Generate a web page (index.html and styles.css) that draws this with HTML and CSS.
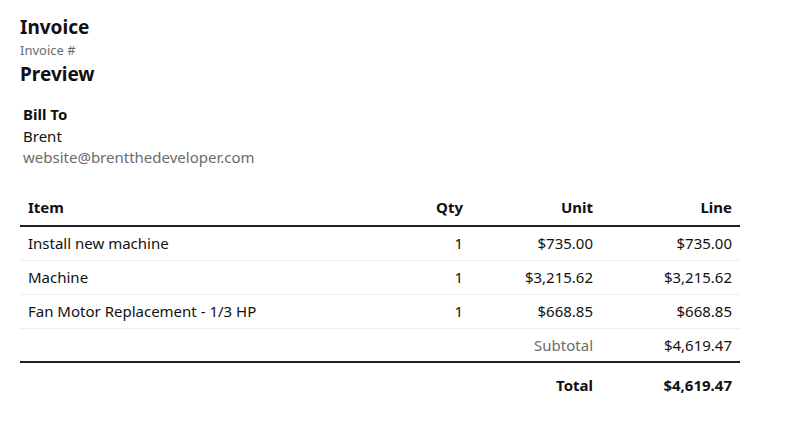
FILE: index.html
```html
<!DOCTYPE html>
<html lang="en">
<head>
    <meta charset="UTF-8">
    <meta name="viewport" content="width=device-width, initial-scale=1.0">
    <title>Invoice Preview</title>
    <link rel="stylesheet" href="styles.css">
</head>
<body>
    <div class="invoice">
        <div class="invoice-head">
            <h1 class="invoice-title">Invoice</h1>
            <div class="invoice-number">Invoice #</div>
            <h2 class="invoice-sub">Preview</h2>
        </div>

        <div class="bill-to">
            <div class="bill-label">Bill To</div>
            <div class="bill-name">Brent</div>
            <div class="bill-email">website@brentthedeveloper.com</div>
        </div>

        <table class="items">
            <thead>
                <tr>
                    <th class="col-item">Item</th>
                    <th class="col-qty num">Qty</th>
                    <th class="col-unit num">Unit</th>
                    <th class="col-line num">Line</th>
                </tr>
            </thead>
            <tbody>
                <tr>
                    <td>Install new machine</td>
                    <td class="num">1</td>
                    <td class="num">$735.00</td>
                    <td class="num">$735.00</td>
                </tr>
                <tr>
                    <td>Machine</td>
                    <td class="num">1</td>
                    <td class="num">$3,215.62</td>
                    <td class="num">$3,215.62</td>
                </tr>
                <tr>
                    <td>Fan Motor Replacement - 1/3 HP</td>
                    <td class="num">1</td>
                    <td class="num">$668.85</td>
                    <td class="num">$668.85</td>
                </tr>
            </tbody>
            <tfoot>
                <tr class="subtotal-row">
                    <td></td>
                    <td></td>
                    <td class="num muted">Subtotal</td>
                    <td class="num">$4,619.47</td>
                </tr>
                <tr class="total-row">
                    <td></td>
                    <td></td>
                    <td class="num">Total</td>
                    <td class="num">$4,619.47</td>
                </tr>
            </tfoot>
        </table>
    </div>
</body>
</html>
```

FILE: styles.css
```css
* {
    margin: 0;
    padding: 0;
    box-sizing: border-box;
}

body {
    font-family: "Noto Sans", "Open Sans", sans-serif;
    font-size: 15px;
    color: #111;
    background: #fff;
    padding: 14px 20px;
}

.invoice {
    width: 720px;
}

.invoice-title {
    font-size: 19px;
    line-height: 26px;
    font-weight: 700;
}

.invoice-number {
    font-size: 13px;
    line-height: 20px;
    color: #6b6b6b;
}

.invoice-sub {
    font-size: 19px;
    line-height: 28px;
    font-weight: 700;
}

.bill-to {
    padding: 15px 3px 0;
    margin-bottom: 20px;
}

.bill-label {
    font-weight: 700;
    line-height: 22px;
}

.bill-name {
    line-height: 22px;
}

.bill-email {
    line-height: 21px;
    color: #6b6b6b;
}

.items {
    width: 100%;
    border-collapse: collapse;
}

.items th,
.items td {
    padding: 0 8px;
    height: 34px;
    text-align: left;
    vertical-align: middle;
}

.items th {
    font-weight: 700;
    height: 38px;
    border-bottom: 2px solid #222;
}

.items tbody td {
    border-bottom: 1px solid #eee;
}

.items .num {
    text-align: right;
}

.col-qty {
    width: 80px;
}

.col-unit {
    width: 130px;
}

.col-line {
    width: 139px;
}

.muted {
    color: #6b6b6b;
}

.subtotal-row td {
    border-bottom: 2px solid #222;
}

.total-row td {
    font-weight: 700;
    height: 44px;
}
```
